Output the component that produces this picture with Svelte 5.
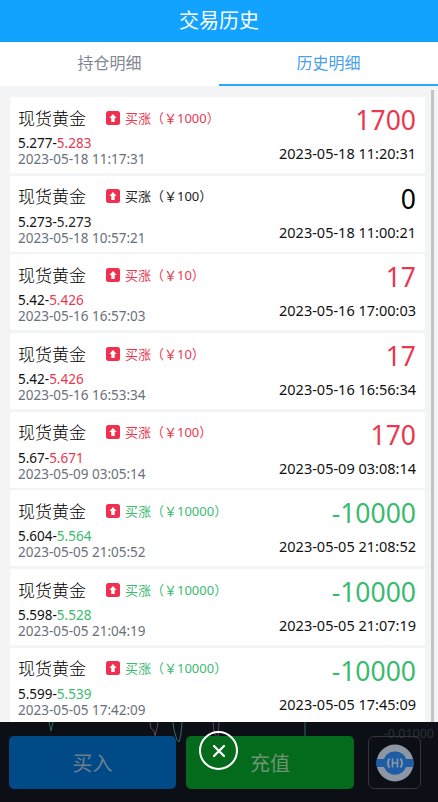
<script>
  const trades = [
    { range: '5.277-', close: '5.283', stake: 1000, profit: '1700', tone: 'up', open: '2023-05-18 11:17:31', shut: '2023-05-18 11:20:31' },
    { range: '5.273-', close: '5.273', stake: 100, profit: '0', tone: 'flat', open: '2023-05-18 10:57:21', shut: '2023-05-18 11:00:21' },
    { range: '5.42-', close: '5.426', stake: 10, profit: '17', tone: 'up', open: '2023-05-16 16:57:03', shut: '2023-05-16 17:00:03' },
    { range: '5.42-', close: '5.426', stake: 10, profit: '17', tone: 'up', open: '2023-05-16 16:53:34', shut: '2023-05-16 16:56:34' },
    { range: '5.67-', close: '5.671', stake: 100, profit: '170', tone: 'up', open: '2023-05-09 03:05:14', shut: '2023-05-09 03:08:14' },
    { range: '5.604-', close: '5.564', stake: 10000, profit: '-10000', tone: 'down', open: '2023-05-05 21:05:52', shut: '2023-05-05 21:08:52' },
    { range: '5.598-', close: '5.528', stake: 10000, profit: '-10000', tone: 'down', open: '2023-05-05 21:04:19', shut: '2023-05-05 21:07:19' },
    { range: '5.599-', close: '5.539', stake: 10000, profit: '-10000', tone: 'down', open: '2023-05-05 17:42:09', shut: '2023-05-05 17:45:09' }
  ];
</script>

<div class="page">
  <header>交易历史</header>
  <nav>
    <span class="tab">持仓明细</span>
    <span class="tab active">历史明细</span>
  </nav>

  <div class="list">
    {#each trades as t}
      <div class="card {t.tone}">
        <div class="left">
          <div class="title">
            <span class="name">现货黄金</span>
            <svg class="arrow" viewBox="0 0 14 14" width="14" height="14">
              <rect width="14" height="14" rx="2.5" fill="#f0304f" />
              <path d="M7 3 10.6 7H8.7v4H5.3V7H3.4z" fill="#fff" />
            </svg>
            <span class="dir">买涨（￥{t.stake}）</span>
          </div>
          <div class="price">{t.range}<span class="close">{t.close}</span></div>
          <div class="opened">{t.open}</div>
        </div>
        <div class="right">
          <div class="profit">{t.profit}</div>
          <div class="shut">{t.shut}</div>
        </div>
      </div>
    {/each}
    <div class="thumb"></div>
  </div>

  <footer>
    <svg class="chart" viewBox="0 0 438 80" width="438" height="80">
      <path d="M49 0l2 9 2-9" stroke="#2b6a68" />
      <path d="M150 0l1 6 3 3 1 5 2-8 1-6" stroke="#5f4468" />
      <path d="M173 0l1 8 3 10 2 2 2-8 1-12" stroke="#33696f" />
      <path d="M213 0l1 10 2 4 2 1 1-15" stroke="#5f4468" />
      <path d="M305 0v14" stroke="#2b6a68" />
    </svg>
    <span class="axis">-0.01000</span>
    <button class="buy">买入</button>
    <button class="charge">充值</button>
    <div class="logo">
      <svg viewBox="0 0 38 38" width="38" height="38">
        <circle cx="19" cy="19" r="18.5" fill="#8c97a3" />
        <path d="M0.7 15H8a12 12 0 0 1 22 0h7.3a19 19 0 0 1 0 8H30a12 12 0 0 1-22 0H0.7a19 19 0 0 1 0-8z" fill="#1f5ca6" />
        <circle cx="19" cy="19" r="11.5" fill="#1f5ca6" />
        <path d="M13.5 14.5a8 8 0 0 0 0 9M24.5 14.5a8 8 0 0 1 0 9" fill="none" stroke="#8c97a3" stroke-width="1.8" />
        <path d="M16.5 14.5v9M21.5 14.5v9M16.5 19h5" fill="none" stroke="#8c97a3" stroke-width="1.6" />
      </svg>
    </div>
    <div class="close-btn">
      <svg viewBox="0 0 14 14" width="14" height="14">
        <path d="M2 2l10 10M12 2L2 12" stroke="#fff" stroke-width="2.2" stroke-linecap="round" />
      </svg>
    </div>
  </footer>
</div>

<style>
  :global(body) {
    margin: 0;
  }

  .page {
    width: 438px;
    height: 802px;
    display: flex;
    flex-direction: column;
    overflow: hidden;
    background: #f3f4f6;
    font-family: "Noto Sans", "Noto Sans CJK SC", sans-serif;
  }

  header {
    height: 42px;
    line-height: 42px;
    flex: none;
    background: #11a3ff;
    color: #fff;
    font-size: 20px;
    text-align: center;
  }

  nav {
    height: 44px;
    flex: none;
    display: flex;
    background: #fff;
  }

  .tab {
    flex: 1;
    line-height: 43px;
    text-align: center;
    font-size: 16px;
    color: #7f8894;
    box-sizing: border-box;
  }

  .tab.active {
    color: #4a9fe8;
    border-bottom: 2px solid #2ea6f5;
  }

  .list {
    position: relative;
    flex: 1;
    min-height: 0;
    overflow: hidden;
    padding: 11px 13px 0 10px;
    display: flex;
    flex-direction: column;
    gap: 2.7px;
  }

  .thumb {
    position: absolute;
    right: 4px;
    top: 4px;
    bottom: 0;
    width: 3px;
    background: #c4c4c6;
  }

  .card {
    flex: none;
    height: 76px;
    box-sizing: border-box;
    padding: 8px 9px 0 8px;
    background: #fff;
    display: flex;
    justify-content: space-between;
    border-radius: 2px;
  }

  .title {
    display: flex;
    align-items: center;
    height: 24px;
  }

  .name {
    font-size: 17px;
    font-weight: 300;
    color: #000;
    width: 88px;
  }

  .arrow {
    margin-right: 5px;
    margin-top: 1px;
  }

  .dir {
    font-size: 13px;
  }

  .price {
    font-size: 13.5px;
    line-height: 16px;
    margin-top: 6px;
    color: #111;
  }

  .opened {
    font-size: 13.5px;
    line-height: 16px;
    color: #69707c;
  }

  .right {
    text-align: right;
  }

  .profit {
    font-size: 26.5px;
    line-height: 30px;
  }

  .shut {
    font-size: 14.5px;
    line-height: 18px;
    margin-top: 9px;
    color: #111;
  }

  .up .dir, .up .close, .up .profit {
    color: #e8384f;
  }

  .down .dir, .down .close, .down .profit {
    color: #3cba6f;
  }

  .flat .dir, .flat .close {
    color: #222;
  }

  .flat .profit {
    color: #000;
  }

  footer {
    position: relative;
    height: 80px;
    flex: none;
    box-sizing: border-box;
    padding: 14px 17px 13px 9px;
    display: flex;
    background: #0d0f16;
    z-index: 1;
  }

  .chart {
    position: absolute;
    left: 0;
    top: 0;
    fill: none;
    stroke-width: 1;
  }

  .axis {
    position: absolute;
    right: 4px;
    top: 3px;
    font-size: 12.5px;
    color: #2c2f36;
  }

  button {
    position: relative;
    height: 53px;
    width: 167px;
    border: none;
    border-radius: 5px;
    padding: 0;
    font: inherit;
    font-size: 20px;
    color: #6d7f8c;
  }

  .buy {
    background: #004a87;
    margin-right: 10px;
  }

  .charge {
    width: 168px;
    background: #046a1c;
    color: #6f9474;
    margin-right: 14px;
  }

  .logo {
    position: relative;
    width: 53px;
    height: 53px;
    box-sizing: border-box;
    border: 1px solid #33363d;
    border-radius: 6px;
    display: flex;
    align-items: center;
    justify-content: center;
  }

  .close-btn {
    position: absolute;
    left: 199px;
    top: 9px;
    width: 39px;
    height: 39px;
    box-sizing: border-box;
    border: 2px solid #fff;
    border-radius: 50%;
    display: flex;
    align-items: center;
    justify-content: center;
  }
</style>
